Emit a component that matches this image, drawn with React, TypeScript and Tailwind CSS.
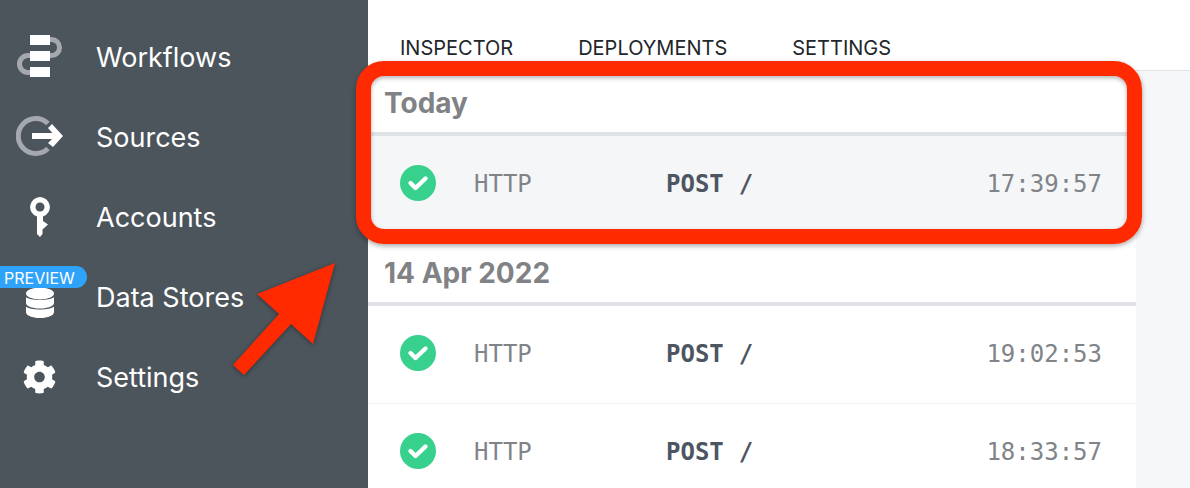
const sans = "font-['Inter','Liberation_Sans',sans-serif] [font-optical-sizing:none]";

function WorkflowsIcon() {
  return (
    <svg width="50" height="46" viewBox="0 0 50 46" className="block">
      <path d="M34 5.500 h1.500 a8 8 0 0 1 0 16 h-1.500" fill="none" stroke="#a5a9af" strokeWidth="5" />
      <path d="M14 21.500 h-2 a8.500 8.500 0 0 0 0 17 h2" fill="none" stroke="#a5a9af" strokeWidth="5" />
      <rect x="14" y="1" width="20" height="10" fill="#fff" />
      <rect x="14" y="17" width="20" height="10" fill="#fff" />
      <rect x="14" y="33" width="20" height="10" fill="#fff" />
    </svg>
  );
}

function SourcesIcon() {
  return (
    <svg width="50" height="42" viewBox="0 0 50 42" className="block">
      <path d="M32 7.500 A17.500 17.500 0 1 0 32 32.500" fill="none" stroke="#a5a9af" strokeWidth="5" />
      <path d="M16 17 h25 v6 h-25 z" fill="#fff" />
      <path d="M36 8 L47 20 L37 31 L32 27 L39 20 L32 12 Z" fill="#fff" />
    </svg>
  );
}

function KeyIcon() {
  return (
    <svg width="22" height="42" viewBox="0 0 22 42" className="block -translate-x-px">
      <path d="M11 1 a10 10 0 0 1 3 19.500 V25 l5 3.500 l-5.500 5 V38 l-2.500 3 l-3 -3 V20.500 A10 10 0 0 1 11 1 z" fill="#fff" />
      <circle cx="11" cy="11" r="4.500" fill="#4c545c" />
    </svg>
  );
}

function DbIcon() {
  return (
    <svg width="30" height="32" viewBox="0 0 30 32" className="block -translate-x-px">
      <ellipse cx="15" cy="6.500" rx="14" ry="6" fill="#fff" />
      <path d="M1 10 c3 4 25 4 28 0 v6 c0 3 -6 5.500 -14 5.500 S1 19 1 16 z" fill="#fff" />
      <path d="M1 19.500 c3 4 25 4 28 0 V25 c0 3.500 -6 6 -14 6 S1 28.500 1 25 z" fill="#fff" />
    </svg>
  );
}

function GearIcon() {
  return (
    <svg width="34" height="34" viewBox="0 0 512 512" className="block -translate-x-[1.500px]">
      <path
        fill="#fff"
        d="M487.4 315.7l-42.6-24.6c4.300-23.200 4.300-47 0-70.200l42.600-24.600c4.900-2.800 7.100-8.600 5.500-14-11.100-35.600-30-67.800-54.700-94.600-3.800-4.100-10-5.100-14.800-2.300L380.800 110c-17.900-15.400-38.500-27.300-60.800-35.100V25.800c0-5.600-3.900-10.500-9.400-11.700-36.700-8.200-74.300-7.800-109.200 0-5.500 1.200-9.400 6.100-9.400 11.700V75c-22.200 7.900-42.800 19.800-60.800 35.100L88.700 85.500c-4.900-2.800-11-1.900-14.800 2.300-24.700 26.700-43.600 58.900-54.700 94.600-1.700 5.400.6 11.200 5.500 14L67.300 221c-4.300 23.200-4.300 47 0 70.200l-42.600 24.600c-4.900 2.800-7.100 8.600-5.500 14 11.100 35.600 30 67.800 54.700 94.600 3.800 4.100 10 5.100 14.800 2.300l42.600-24.600c17.900 15.400 38.500 27.300 60.800 35.100v49.200c0 5.600 3.900 10.500 9.400 11.700 36.700 8.200 74.300 7.800 109.200 0 5.500-1.200 9.400-6.100 9.400-11.700v-49.200c22.200-7.900 42.800-19.800 60.800-35.100l42.600 24.600c4.900 2.800 11 1.900 14.800-2.300 24.700-26.700 43.600-58.900 54.700-94.600 1.500-5.500-.7-11.300-5.600-14.100zM256 336c-44.100 0-80-35.900-80-80s35.900-80 80-80 80 35.900 80 80-35.900 80-80 80z"
      />
    </svg>
  );
}

function NavItem({ icon, label, badge }: { icon: React.ReactNode; label: string; badge?: boolean }) {
  return (
    <div className="relative flex h-20 items-center">
      <div className="flex w-24 shrink-0 justify-start pl-[16px]">
        <div className="flex w-[50px] justify-center">{icon}</div>
      </div>
      <span className="pt-px text-[27px] leading-none text-white">{label}</span>
      {badge && (
        <span className="absolute left-0 top-[9px] flex h-[22px] w-[87px] items-center rounded-r-full bg-[#2ea3f9] pl-1 pt-px text-[16px] leading-none text-white">
          PREVIEW
        </span>
      )}
    </div>
  );
}

function StatusIcon() {
  return (
    <svg width="36" height="36" viewBox="0 0 36 36" className="block shrink-0">
      <circle cx="18" cy="18" r="18" fill="#38d08d" />
      <path d="M10.500 18 l5 5 l10 -9.500" fill="none" stroke="#fff" strokeWidth="4.400" strokeLinecap="round" strokeLinejoin="round" />
    </svg>
  );
}

function Row({ time, active, last }: { time: string; active?: boolean; last?: boolean }) {
  return (
    <div className={`flex h-[98px] items-center pb-1 pl-8 pr-[34px] font-['DejaVu_Sans_Mono',monospace] text-[24px] leading-none ${active ? "bg-[#f5f6f8]" : "bg-white"} ${last ? "" : "border-b border-[#eef0f2]"}`}>
      <StatusIcon />
      <span className="ml-[38px] w-[192px] pt-0.5 text-[#808488]">HTTP</span>
      <span className="pt-0.5 text-[#4d5560]">
        <b className="font-bold">POST</b>
        <span className="ml-[15px] font-bold">/</span>
      </span>
      <span className="ml-auto pt-0.5 text-[#808488]">{time}</span>
    </div>
  );
}

function DateHeader({ label, top }: { label: string; top: string }) {
  return (
    <div className={`flex items-center border-b-4 border-[#dfe3e8] bg-white pl-[16px] text-[28px] font-bold leading-none text-[#808285] ${top}`}>
      {label}
    </div>
  );
}

export default function App() {
  return (
    <div className={`relative flex h-[488px] w-[1190px] overflow-hidden bg-[#f6f7f9] ${sans}`}>
      <aside className="w-[368px] shrink-0 bg-[#4c545c] pt-[17px]">
        <NavItem icon={<WorkflowsIcon />} label="Workflows" />
        <NavItem icon={<SourcesIcon />} label="Sources" />
        <NavItem icon={<KeyIcon />} label="Accounts" />
        <NavItem icon={<div className="pt-[12px]"><DbIcon /></div>} label="Data Stores" badge />
        <NavItem icon={<GearIcon />} label="Settings" />
      </aside>
      <main className="flex min-w-0 flex-1 flex-col">
        <nav className="flex h-[71px] shrink-0 gap-[65px] border-b border-[#dfe3e8] bg-white pl-8 pt-[37px] text-[20px] leading-[22px] text-[#22262a]">
          <span>INSPECTOR</span>
          <span>DEPLOYMENTS</span>
          <span>SETTINGS</span>
        </nav>
        <div className="w-[768px]">
          <DateHeader label="Today" top="h-[65px] pt-[2px]" />
          <Row time="17:39:57" active />
          <DateHeader label="14 Apr 2022" top="h-[72px] pt-[10px]" />
          <Row time="19:02:53" />
          <Row time="18:33:57" last />
        </div>
      </main>

      <div className="absolute left-[356px] top-[61px] h-[183px] w-[786px] rounded-[28px] border-[15px] border-[#ff2a00] shadow-[0_2px_5px_rgba(0,0,0,0.35),inset_0_2px_4px_rgba(0,0,0,0.3)]" />
      <svg width="110" height="120" viewBox="0 0 110 120" className="absolute left-[232px] top-[260px] drop-shadow-[0_1px_2px_rgba(0,0,0,0.4)]">
        <path d="M103 3 L81 84 L59 64 L12 115 L1 105 L47 54 L25 34 Z" fill="#ff2a00" />
      </svg>
    </div>
  );
}
